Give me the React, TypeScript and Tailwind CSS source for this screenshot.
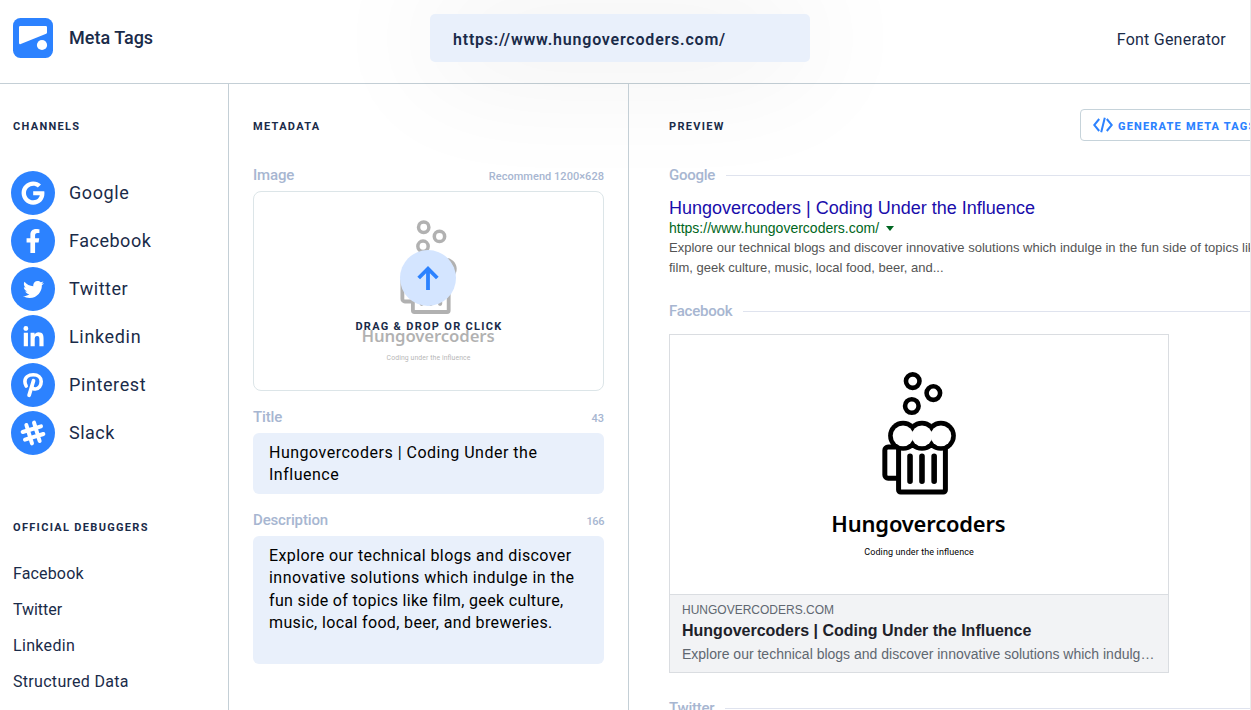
import type { ReactNode } from "react";
import { FaFacebookF, FaGoogle, FaLinkedinIn, FaTwitter } from "react-icons/fa";

function SlackHash() {
  return (
    <svg width="26" height="26" viewBox="-13 -13 26 26" fill="none" stroke="currentColor" strokeWidth="4" strokeLinecap="round">
      <g transform="rotate(-17)">
        <path d="M-9.6 -4H9.6M-9.6 4H9.6M-4 -9.6V9.6M4 -9.6V9.6" />
      </g>
    </svg>
  );
}

function PinterestMark() {
  return (
    <svg width="26" height="26" viewBox="-13 -13 26 26" fill="none" stroke="currentColor" strokeWidth="3.6" strokeLinecap="round">
      <path d="M-6.8 1C-7.7 -0.400 -8.100 -1.900 -8.100 -3.500C-8.100 -7.600 -4.700 -10.300 0.300 -10.300C5 -10.300 8.200 -7.600 8.200 -3.600C8.200 0.900 5.600 4 2.400 4C0.600 4 -0.800 3.200 -1.300 2" />
      <path d="M0.500 -4.200L-3.900 10.300" strokeWidth="3.800" />
    </svg>
  );
}

const channels: { name: string; icon: ReactNode; tracking: string }[] = [
  { name: "Google", icon: <FaGoogle size={24} />, tracking: "tracking-[0.6px]" },
  { name: "Facebook", icon: <FaFacebookF size={24} />, tracking: "tracking-[0.52px]" },
  { name: "Twitter", icon: <FaTwitter size={21} />, tracking: "tracking-[0.5px]" },
  { name: "Linkedin", icon: <FaLinkedinIn size={23} />, tracking: "tracking-[0.66px]" },
  { name: "Pinterest", icon: <PinterestMark />, tracking: "tracking-[0.6px]" },
  { name: "Slack", icon: <SlackHash />, tracking: "tracking-[0.5px]" },
];

const debuggers = [
  { name: "Facebook", tracking: "tracking-[0.15px]" },
  { name: "Twitter", tracking: "tracking-[-0.05px]" },
  { name: "Linkedin", tracking: "tracking-[0.33px]" },
  { name: "Structured Data", tracking: "tracking-[0.3px]" },
];

function BeerArtwork({ className }: { className: string }) {
  return (
    <svg className={className} viewBox="669 335 500 260" preserveAspectRatio="xMidYMid slice">
      <g fill="none" stroke="#000" strokeWidth="4.6">
        <circle cx="912.7" cy="381.3" r="6.8" />
        <circle cx="933.4" cy="393.3" r="6.8" />
        <circle cx="911.8" cy="406.3" r="6.8" />
        <rect x="898.5" y="446" width="47" height="46.6" rx="2" strokeWidth="5" />
        <path d="M898 447.5H888a3.3 3.3 0 0 0-3.3 3.3v24.7a3.3 3.3 0 0 0 3.3 3.3H898" strokeWidth="5" />
        <path d="M910 456.8v25M922 456.8v25M934.2 456.8v25" strokeWidth="5.6" strokeLinecap="round" />
      </g>
      <g fill="#000">
        <circle cx="903" cy="436.2" r="15" />
        <circle cx="922" cy="436.2" r="15" />
        <circle cx="941" cy="436.2" r="15" />
      </g>
      <g fill="#fff">
        <circle cx="903" cy="436.2" r="10.4" />
        <circle cx="922" cy="436.2" r="10.4" />
        <circle cx="941" cy="436.2" r="10.4" />
      </g>
      <text x="831" y="532.5" textLength="175" className="font-['Noto_Sans'] text-[22px] font-semibold">
        Hungovercoders
      </text>
      <text x="864" y="555.6" textLength="110" className="font-['Roboto'] text-[9px]">
        Coding under the influence
      </text>
    </svg>
  );
}

function Heading({ children }: { children: string }) {
  return <h2 className="text-[11px] leading-4 font-bold tracking-[1.32px] uppercase">{children}</h2>;
}

function FieldLabel({ label, note, noteClass = "" }: { label: string; note: string; noteClass?: string }) {
  return (
    <div className="flex h-4 items-center justify-between font-medium text-[#a7b6d1]">
      <span className="text-[15px] leading-4 tracking-[-0.15px]">{label}</span>
      <span className={`pt-[3px] text-[11px] leading-4 ${noteClass}`}>{note}</span>
    </div>
  );
}

function PreviewLabel({ label }: { label: string }) {
  return (
    <div className="flex h-4 items-center gap-[11px]">
      <span className="text-[15px] leading-4 font-medium tracking-[-0.25px] text-[#a7b6d1]">{label}</span>
      <span className="mt-px h-px flex-1 bg-[#dfe3ee]" />
    </div>
  );
}

export default function App() {
  return (
    <div className="h-[710px] w-[1251px] overflow-hidden border-r border-[#ebebeb] bg-white font-['Roboto',sans-serif] text-[#1a2b49]">
      <header className="flex h-[84px] items-start justify-between border-b border-[#c4cfd6] pr-6 pl-[13px]">
        <div className="flex w-[417px] items-center gap-4 pt-[18px]">
          <svg width="40" height="40" viewBox="0 0 40 40">
            <rect width="40" height="40" rx="7.5" fill="#2c82ff" />
            <path d="M7.2 8H32.800a1.200 1.200 0 0 1 1.200 1.200V14.600a1.200 1.200 0 0 1-.8 1.100L7.700 25.900a1.200 1.200 0 0 1-1.700-1.100V9.200A1.200 1.200 0 0 1 7.200 8Z" fill="#fff" />
            <circle cx="29" cy="27" r="5.100" fill="#fff" />
          </svg>
          <span className="text-lg leading-6 font-medium">Meta Tags</span>
        </div>
        <div className="mt-3.5 flex h-12 w-[380px] items-center rounded-[5px] bg-[#e9f0fb] pt-1 pl-[23px] text-base font-semibold tracking-[0.79px] shadow-[0_0_125px_rgba(0,0,0,0.1)]">
          https://www.hungovercoders.com/
        </div>
        <nav className="flex w-[416px] justify-end pt-7 text-base tracking-[0.23px]">Font Generator</nav>
      </header>

      <main className="flex h-[626px]">
        <aside className="w-[229px] shrink-0 border-r border-[#c4cfd6] pt-[35px]">
          <div className="pl-[13px]">
            <Heading>Channels</Heading>
          </div>
          <ul className="mt-9 flex flex-col gap-1 pl-[11px]">
            {channels.map((c) => (
              <li key={c.name} className="flex h-11 items-center gap-3.5">
                <span className="flex size-11 items-center justify-center rounded-full bg-[#2c82ff] text-white">{c.icon}</span>
                <span className={`text-lg ${c.tracking}`}>{c.name}</span>
              </li>
            ))}
          </ul>
          <div className="mt-[65px] pl-[13px]">
            <Heading>Official Debuggers</Heading>
            <ul className="mt-5">
              {debuggers.map((d) => (
                <li key={d.name} className={`flex h-9 items-center text-base ${d.tracking}`}>
                  {d.name}
                </li>
              ))}
            </ul>
          </div>
        </aside>

        <section className="w-[400px] shrink-0 border-r border-[#c4cfd6] px-6 pt-[35px]">
          <Heading>Metadata</Heading>
          <div className="mt-8">
            <FieldLabel label="Image" note="Recommend 1200×628" noteClass="tracking-[0.04px]" />
          </div>
          <div className="relative mt-2 h-[200px] rounded-lg border border-[#dce5e8] bg-white">
            <BeerArtwork className="h-full w-full opacity-30" />
            <div className="absolute inset-0 flex flex-col items-center pt-[58px]">
              <svg className="mr-px" width="56" height="56" viewBox="0 0 56 56">
                <circle cx="28" cy="28" r="28" fill="#d4e5ff" />
                <path d="M28 40V18.500M18.700 28L28 18.700L37.300 28" fill="none" stroke="#2c82ff" strokeWidth="3.800" />
              </svg>
              <span className="mt-[13px] pl-px text-[11px] leading-4 font-bold tracking-[1.3px]">DRAG &amp; DROP OR CLICK</span>
            </div>
          </div>
          <div className="mt-[18px]">
            <FieldLabel label="Title" note="43" />
          </div>
          <div className="mt-2 h-[61px] rounded-md bg-[#e9f0fb] px-4 pt-[9px] text-base leading-[22.4px] text-black">
            <p className="whitespace-nowrap tracking-[0.5px]">Hungovercoders | Coding Under the</p>
            <p className="tracking-[0.5px]">Influence</p>
          </div>
          <div className="mt-[18px]">
            <FieldLabel label="Description" note="166" noteClass="tracking-[-0.4px]" />
          </div>
          <div className="mt-2 h-32 rounded-md bg-[#e9f0fb] px-4 pt-[9px] text-base leading-[22.4px] whitespace-nowrap text-black">
            <p className="tracking-[0.4px]">Explore our technical blogs and discover</p>
            <p className="tracking-[0.46px]">innovative solutions which indulge in the</p>
            <p className="tracking-[0.34px]">fun side of topics like film, geek culture,</p>
            <p className="tracking-[0.35px]">music, local food, beer, and breweries.</p>
          </div>
        </section>

        <section className="min-w-0 flex-1 overflow-hidden pl-10">
          <div className="w-[600px] pt-[25px]">
            <div className="flex h-8 items-center justify-between">
              <div className="pt-[3px]">
                <Heading>Preview</Heading>
              </div>
              <button className="flex h-8 w-[189px] items-center gap-[5px] rounded border border-[#c6d3da] pl-3 text-[#2c82ff]">
                <svg width="20" height="16" viewBox="0 0 20 16" fill="none" stroke="currentColor" strokeWidth="2">
                  <path d="M6.200 2L1.200 8L6.200 14M13.800 2L18.800 8L13.800 14M11.800 .8L8.200 15.200" />
                </svg>
                <span className="pt-[3px] text-[11px] leading-4 font-extrabold tracking-[1.18px] whitespace-nowrap">GENERATE META TAGS</span>
              </button>
            </div>

            <div className="mt-[26px]">
              <PreviewLabel label="Google" />
            </div>
            <div className="mt-[14px] font-['Liberation_Sans',Arial,sans-serif]">
              <p className="text-lg leading-[22px] text-[#1a0dab]">Hungovercoders | Coding Under the Influence</p>
              <p className="flex h-[18px] items-center gap-[7px] text-sm leading-[18px] text-[#006621]">
                https://www.hungovercoders.com/
                <svg width="8" height="5" viewBox="0 0 8 5" fill="currentColor">
                  <path d="M0 0H8L4 5Z" />
                </svg>
              </p>
              <p className="pt-px text-[13px] leading-5 whitespace-nowrap text-[#545454]">
                Explore our technical blogs and discover innovative solutions which indulge in the fun side of topics like
                <br />
                film, geek culture, music, local food, beer, and...
              </p>
            </div>

            <div className="mt-[25px]">
              <PreviewLabel label="Facebook" />
            </div>
            <div className="mt-[15px] h-[339px] w-[500px] border border-[#dadde1] font-['Liberation_Sans',Arial,sans-serif]">
              <BeerArtwork className="h-[259px] w-full" />
              <div className="h-[78px] border-t border-[#dadde1] bg-[#f2f3f5] px-3 pt-[7px] whitespace-nowrap text-[#606770]">
                <p className="text-xs leading-4">HUNGOVERCODERS.COM</p>
                <p className="pt-[3px] text-base leading-5 font-bold text-[#1d2129]">Hungovercoders | Coding Under the Influence</p>
                <p className="pt-[3px] text-sm leading-5">Explore our technical blogs and discover innovative solutions which indulg…</p>
              </div>
            </div>

            <div className="mt-[27px]">
              <PreviewLabel label="Twitter" />
            </div>
          </div>
        </section>
      </main>
    </div>
  );
}
